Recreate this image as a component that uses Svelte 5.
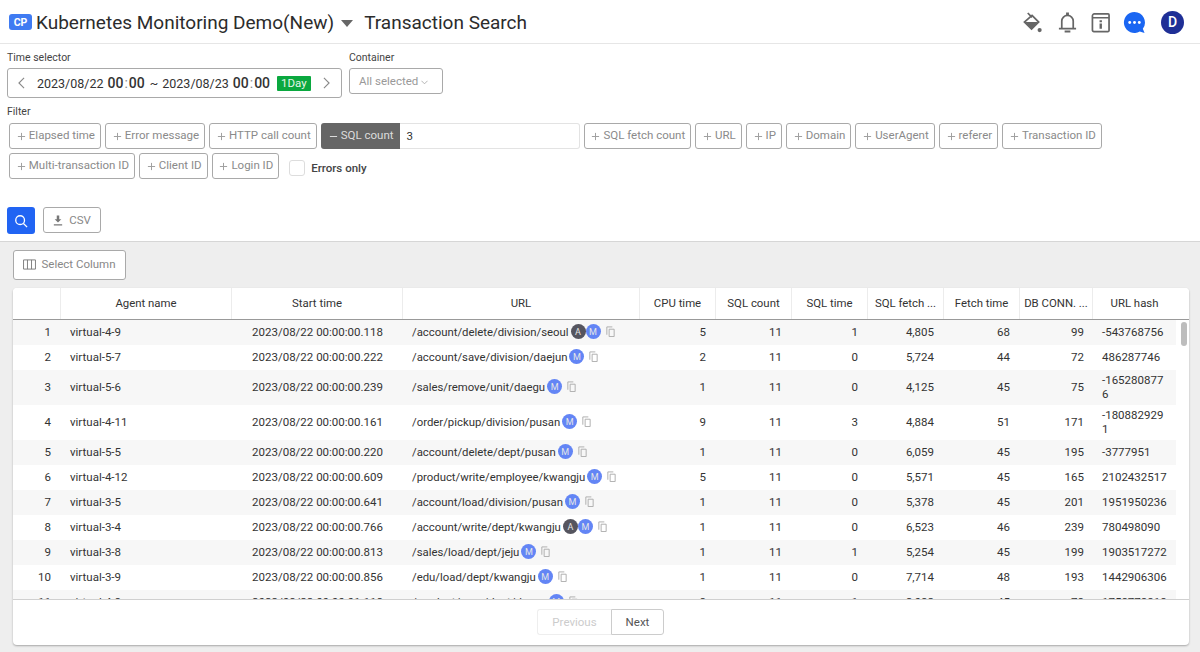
<script>
  const leftFilters = ['Elapsed time', 'Error message', 'HTTP call count'];
  const rightFilters = ['SQL fetch count', 'URL', 'IP', 'Domain', 'UserAgent', 'referer', 'Transaction ID'];
  const secondFilters = ['Multi-transaction ID', 'Client ID', 'Login ID'];
  const headers = ['', 'Agent name', 'Start time', 'URL', 'CPU time', 'SQL count', 'SQL time', 'SQL fetch ...', 'Fetch time', 'DB CONN. ...', 'URL hash'];
  const rows = [
    [1, 'virtual-4-9', '00:00:00.118', '/account/delete/division/seoul', true, 5, 11, 1, '4,805', 68, 99, '-543768756'],
    [2, 'virtual-5-7', '00:00:00.222', '/account/save/division/daejun', false, 2, 11, 0, '5,724', 44, 72, '486287746'],
    [3, 'virtual-5-6', '00:00:00.239', '/sales/remove/unit/daegu', false, 1, 11, 0, '4,125', 45, 75, '-1652808776'],
    [4, 'virtual-4-11', '00:00:00.161', '/order/pickup/division/pusan', false, 9, 11, 3, '4,884', 51, 171, '-1808829291'],
    [5, 'virtual-5-5', '00:00:00.220', '/account/delete/dept/pusan', false, 1, 11, 0, '6,059', 45, 195, '-3777951'],
    [6, 'virtual-4-12', '00:00:00.609', '/product/write/employee/kwangju', false, 5, 11, 0, '5,571', 45, 165, '2102432517'],
    [7, 'virtual-3-5', '00:00:00.641', '/account/load/division/pusan', false, 1, 11, 0, '5,378', 45, 201, '1951950236'],
    [8, 'virtual-3-4', '00:00:00.766', '/account/write/dept/kwangju', true, 1, 11, 0, '6,523', 46, 239, '780498090'],
    [9, 'virtual-3-8', '00:00:00.813', '/sales/load/dept/jeju', false, 1, 11, 1, '5,254', 45, 199, '1903517272'],
    [10, 'virtual-3-9', '00:00:00.856', '/edu/load/dept/kwangju', false, 1, 11, 0, '7,714', 48, 193, '1442906306'],
    [11, 'virtual-4-8', '00:00:01.118', '/product/save/dept/daegu', false, 8, 11, 1, '3,082', 45, 78, '1758778818']
  ];
</script>

{#snippet plus()}
  <svg class="plus" viewBox="0 0 10 10" aria-hidden="true"><path d="M5 1v8M1 5h8" /></svg>
{/snippet}

{#snippet copy()}
  <svg class="copy" viewBox="0 0 12 12" aria-hidden="true"><path d="M4.5 3.5h5.5v8h-5.5z" /><path d="M2 9.5V1h6" /></svg>
{/snippet}

<div class="page">
  <header class="top">
    <span class="cp">CP</span>
    <span class="proj">Kubernetes Monitoring Demo(New)</span>
    <svg class="caret" viewBox="0 0 12 7" aria-hidden="true"><path d="M0 0h12L6 7z" /></svg>
    <span class="title">Transaction Search</span>
    <div class="icons">
      <svg class="ic bucket" viewBox="0 0 20 22" aria-hidden="true"><path class="line" d="M5 1l4.500 4.500" /><path class="line" d="M9.500 3.500L16.500 10.500 9 18 1.500 10.500z" /><path d="M2 10.500h14L9 18z" /><circle cx="17.500" cy="19" r="2.200" /></svg>
      <svg class="ic bell" viewBox="0 0 20 22" aria-hidden="true"><path class="line" d="M4 17V9.500a6 6 0 0 1 12 0V17M1 17.500h18" /><path d="M8.500 0.500h3v3h-3zM7 19.500h6v2H7z" /></svg>
      <svg class="ic book" viewBox="0 0 20 22" aria-hidden="true"><path class="line" d="M3.500 2h14.500a1 1 0 0 1 1 1v16.500a1 1 0 0 1-1 1H3a1.500 1.500 0 0 1-1.500-1.500V4a2 2 0 0 1 2-2zM2 6h17" /><path d="M9 8.500h2.500v2.200H9zM9 12h2.500v5.500H9z" /></svg>
      <svg class="chat" viewBox="0 0 24 24" aria-hidden="true"><path d="M12 1a11 11 0 1 0 5.500 20.500l5 1.500-1.800-4.500A11 11 0 0 0 12 1z" /><circle class="dot" cx="7" cy="12" r="1.500" /><circle class="dot" cx="12" cy="12" r="1.500" /><circle class="dot" cx="17" cy="12" r="1.500" /></svg>
      <span class="avatar">D</span>
    </div>
  </header>

  <section class="filters">
    <div class="selectors">
      <div>
        <div class="lab">Time selector</div>
        <div class="timebox">
          <svg class="chev" viewBox="0 0 8 14" aria-hidden="true"><path d="M7 1L1 7l6 6" /></svg>
          <span class="d">2023/08/22</span><b>00<i>:</i>00</b><span class="d tilde">~</span><span class="d">2023/08/23</span><b>00<i>:</i>00</b>
          <span class="day">1Day</span>
          <svg class="chev" viewBox="0 0 8 14" aria-hidden="true"><path d="M1 1l6 6-6 6" /></svg>
        </div>
      </div>
      <div>
        <div class="lab">Container</div>
        <div class="container">All selected <svg viewBox="0 0 8 5" aria-hidden="true"><path d="M.5.500L4 4 7.500.500" /></svg></div>
      </div>
    </div>

    <div class="lab filt">Filter</div>
    <div class="chips">
      {#each leftFilters as f}
        <span class="chip">{@render plus()}{f}</span>
      {/each}
      <span class="active">
        <span class="on"><svg class="plus" viewBox="0 0 10 10" aria-hidden="true"><path d="M1 5h8" /></svg>SQL count</span>
        <span class="val">3</span>
      </span>
      {#each rightFilters as f}
        <span class="chip">{@render plus()}{f}</span>
      {/each}
    </div>
    <div class="chips second">
      {#each secondFilters as f}
        <span class="chip">{@render plus()}{f}</span>
      {/each}
      <span class="check"></span>
      <span class="errors">Errors only</span>
    </div>

    <div class="actions">
      <button class="search" aria-label="Search">
        <svg viewBox="0 0 16 16" aria-hidden="true"><circle cx="7" cy="7" r="5" /><path d="M10.800 10.800L15 15" /></svg>
      </button>
      <button class="csv">
        <svg viewBox="0 0 12 12" aria-hidden="true"><path d="M4.500 0h3v4.500H10L6 8.500 2 4.500h2.500zM1 10.500h10V12H1z" /></svg>
        CSV
      </button>
    </div>
  </section>

  <main class="body">
    <button class="selcol">
      <svg viewBox="0 0 14 12" aria-hidden="true"><path d="M.5 1h13v10H.5zM4.800 1v10M9.200 1v10" /></svg>
      Select Column
    </button>

    <div class="card">
      <div class="row head">
        {#each headers as h}<div class="hc">{h}</div>{/each}
        <div class="pad"></div>
      </div>
      <div class="scroll">
        <div class="rows">
          {#each rows as r, i}
            <div class="row" class:alt={i % 2 === 0}>
              <div class="c num">{r[0]}</div>
              <div class="c">{r[1]}</div>
              <div class="c mid">2023/08/22 {r[2]}</div>
              <div class="c url">
                <span>{r[3]}</span>
                {#if r[4]}<span class="b a">A</span>{/if}
                <span class="b m" class:ov={r[4]}>M</span>
                {@render copy()}
              </div>
              <div class="c num">{r[5]}</div>
              <div class="c num">{r[6]}</div>
              <div class="c num">{r[7]}</div>
              <div class="c num">{r[8]}</div>
              <div class="c num">{r[9]}</div>
              <div class="c num db">{r[10]}</div>
              <div class="c hash">{r[11]}</div>
            </div>
          {/each}
        </div>
        <div class="track"><div class="thumb"></div></div>
      </div>
      <div class="foot">
        <button class="pg prev">Previous</button>
        <button class="pg next">Next</button>
      </div>
    </div>
  </main>
</div>

<style>
  :global(body) { margin: 0; background: #fff; }
  .page {
    width: 1200px; height: 652px; overflow: hidden; display: flex; flex-direction: column;
    font-family: Roboto, "Liberation Sans", sans-serif; font-size: 12px; color: #333;
  }
  .top {
    height: 44px; flex: none; box-sizing: border-box; display: flex; align-items: center;
    padding: 1px 16px 0 9px; border-bottom: 1px solid #e6e6e6;
  }
  .cp {
    width: 23px; height: 16px; background: #3f7bf2; color: #fff; border-radius: 3px; font-size: 10.500px;
    font-weight: 700; display: flex; align-items: center; justify-content: center; margin-right: 4px;
  }
  .proj { font-size: 19px; color: #2c2c2c; }
  .caret { width: 12px; height: 7px; margin: 2px 11px 0 7px; fill: #666; }
  .title { font-size: 19px; color: #2c2c2c; }
  .icons { margin-left: auto; display: flex; align-items: center; }
  .ic { width: 19px; height: 21px; fill: #666; }
  .bucket { margin-right: 15px; }
  .bell { width: 21px; margin-right: 13px; }
  .book { margin-right: 13px; }
  .line { fill: none; stroke: #666; stroke-width: 1.800; }
  .chat { width: 23px; height: 23px; fill: #1a66f2; margin: 0 15px 0 0; }
  .dot { fill: #fff; }
  .avatar {
    width: 23px; height: 23px; border-radius: 50%; background: #1f2f96; color: #fff; font-weight: 500;
    font-size: 14px; display: flex; align-items: center; justify-content: center;
  }

  .filters { height: 198px; flex: none; box-sizing: border-box; padding: 7px 7px 0; border-bottom: 1px solid #d6d6d6; }
  .selectors { display: flex; gap: 7px; }
  .lab { font-size: 10.500px; color: #444; line-height: 13px; }
  .timebox {
    margin-top: 4px; width: 335px; height: 30px; box-sizing: border-box; border: 1px solid #a9a9a9; border-radius: 3px;
    display: flex; align-items: center; padding: 0 10px; color: #333;
  }
  .chev { width: 7px; height: 12px; fill: none; stroke: #888; stroke-width: 1.300; flex: none; }
  .d { font-size: 12.500px; margin-left: 5px; }
  .timebox .chev:first-child { margin-right: 7px; }
  .timebox b { font-size: 14px; font-weight: 500; margin-left: 4px; }
  .timebox i { font-style: normal; font-weight: 400; color: #888; margin: 0 1px; }
  .tilde { margin-left: 5px; margin-right: -1px; }
  .day {
    background: #0aa83f; color: #e6f5ea; font-size: 11.500px; height: 15px; line-height: 15px; padding: 0 4px;
    margin-left: 7px; margin-right: 12px; border-radius: 1px;
  }
  .container {
    margin-top: 4px; width: 94px; height: 26px; box-sizing: border-box; border: 1px solid #a9a9a9; border-radius: 3px;
    display: flex; align-items: center; gap: 3px; padding: 0 9px 1px; color: #999; font-size: 11.500px;
  }
  .container svg { width: 7px; height: 5px; fill: none; stroke: #aaa; margin-top: 3px; }
  .filt { margin-top: 7px; }
  .chips { display: flex; gap: 4px; margin: 5px 0 0 2px; }
  .chips.second { margin-top: 4px; align-items: center; }
  .chip {
    height: 26px; box-sizing: border-box; border: 1px solid #a9a9a9; border-radius: 3px; display: flex; align-items: center;
    padding: 0 5px 2px 6.800px; color: #8a8a8a; font-size: 11.500px; white-space: nowrap; background: #fff;
  }
  .plus { width: 9px; height: 9px; fill: none; stroke: #a0a0a0; stroke-width: 1.100; margin: 2px 3px 0 0; flex: none; }
  .active { display: flex; height: 26px; width: 259px; }
  .on {
    background: #666; color: #ddd; font-size: 11.500px; display: flex; align-items: center; padding: 0 6px 2px 8px;
    border-radius: 3px 0 0 3px; white-space: nowrap;
  }
  .on .plus { stroke: #ddd; }
  .val {
    flex: 1; border: 1px solid #e3e3e3; border-left: 0; border-radius: 0 3px 3px 0; display: flex; align-items: center;
    padding-left: 7px; font-size: 11.500px;
  }
  .check { width: 14px; height: 14px; border: 1px solid #ddd; border-radius: 3px; margin: 3px 0 0 6px; }
  .errors { font-weight: 500; font-size: 11.500px; color: #444; margin: 4px 0 0 2px; }
  .actions { display: flex; gap: 8px; margin-top: 28px; }
  button { font: inherit; padding: 0; background: #fff; cursor: pointer; }
  .search {
    width: 28px; height: 27px; background: #2164f3; border: 0; border-radius: 3px; display: flex; align-items: center; justify-content: center;
  }
  .search svg { width: 14px; height: 14px; fill: none; stroke: #fff; stroke-width: 1.500; }
  .csv {
    width: 58px; height: 26px; border: 1px solid #a9a9a9; border-radius: 3px; display: flex; align-items: center; justify-content: center;
    gap: 6px; color: #888; font-size: 11.500px;
  }
  .csv svg { width: 10px; height: 11px; fill: #777; }

  .body { flex: 1; min-height: 0; background: #eee; padding: 8px 11px 7px 13px; display: flex; flex-direction: column; }
  .selcol {
    width: 113px; height: 30px; flex: none; box-sizing: border-box; border: 1px solid #a9a9a9; border-radius: 3px; display: flex; align-items: center;
    justify-content: center; gap: 5px; color: #888; font-size: 11.500px; padding-bottom: 2px;
  }
  .selcol svg { width: 13px; height: 11px; fill: none; stroke: #777; margin-top: 1px; }
  .card {
    flex: 1; min-height: 0; margin-top: 8px; background: #fff; border-radius: 4px; box-shadow: 0 1px 2px rgba(0,0,0,.3);
    display: flex; flex-direction: column; overflow: hidden;
  }
  .row {
    display: grid; grid-template-columns: 47px 171px 171px 237px 76px 76px 76px 76px 76px 73px 84px;
    align-items: center; min-height: 25px; background: #fff;
  }
  .row.alt { background: #f7f7f7; }
  .head { height: 32px; min-height: 32px; flex: none; grid-template-columns: 47px 171px 171px 237px 76px 76px 76px 76px 76px 73px 84px 13px; border-bottom: 1px solid #999; box-sizing: border-box; }
  .hc {
    height: 100%; display: flex; align-items: center; justify-content: center; border-left: 1px solid #ececec; box-sizing: border-box; font-size: 11.400px; white-space: nowrap; padding-bottom: 1px;
  }
  .hc:first-child { border-left: 0; }
  .scroll { flex: 1; min-height: 0; display: flex; overflow: hidden; }
  .rows { flex: none; width: 1163px; }
  .c { padding: 2.500px 10px 4.500px; font-size: 11.500px; line-height: 14px; }
  .num { text-align: right; padding-right: 9px; }
  .num.db { padding-right: 8px; }
  .mid { text-align: center; padding-left: 11px; padding-right: 9px; }
  .url { display: flex; align-items: center; padding-right: 0; white-space: nowrap; font-size: 11.350px; }
  .b {
    width: 15px; height: 15px; border-radius: 50%; color: #e5e5e5; font-size: 9px; display: inline-flex; align-items: center; justify-content: center; flex: none; margin-left: 2px;
  }
  .a { background: #55555f; }
  .m { background: #6385f5; }
  .m.ov { margin-left: 0; }
  .copy { width: 11px; height: 11px; fill: none; stroke: #aaa; stroke-width: 1; margin-left: 4px; flex: none; }
  .hash { padding: 2.500px 8px 4.500px 10px; word-break: break-all; }
  .track { width: 13px; flex: none; }
  .thumb { width: 6px; height: 24px; margin: 2px 0 0 5px; border-radius: 3px; background: #bdbdbd; }
  .foot { height: 46px; flex: none; border-top: 1px solid #d0d0d0; box-sizing: border-box; display: flex; justify-content: center; padding-top: 9px; padding-right: 1px; }
  .pg { height: 26px; box-sizing: border-box; font-size: 11.500px; border-radius: 3px; }
  .prev { width: 74px; border: 1px solid #eee; color: #ccc; border-right: 0; border-radius: 3px 0 0 3px; }
  .next { width: 53px; border: 1px solid #ccc; color: #555; border-radius: 0 3px 3px 0; }
</style>
